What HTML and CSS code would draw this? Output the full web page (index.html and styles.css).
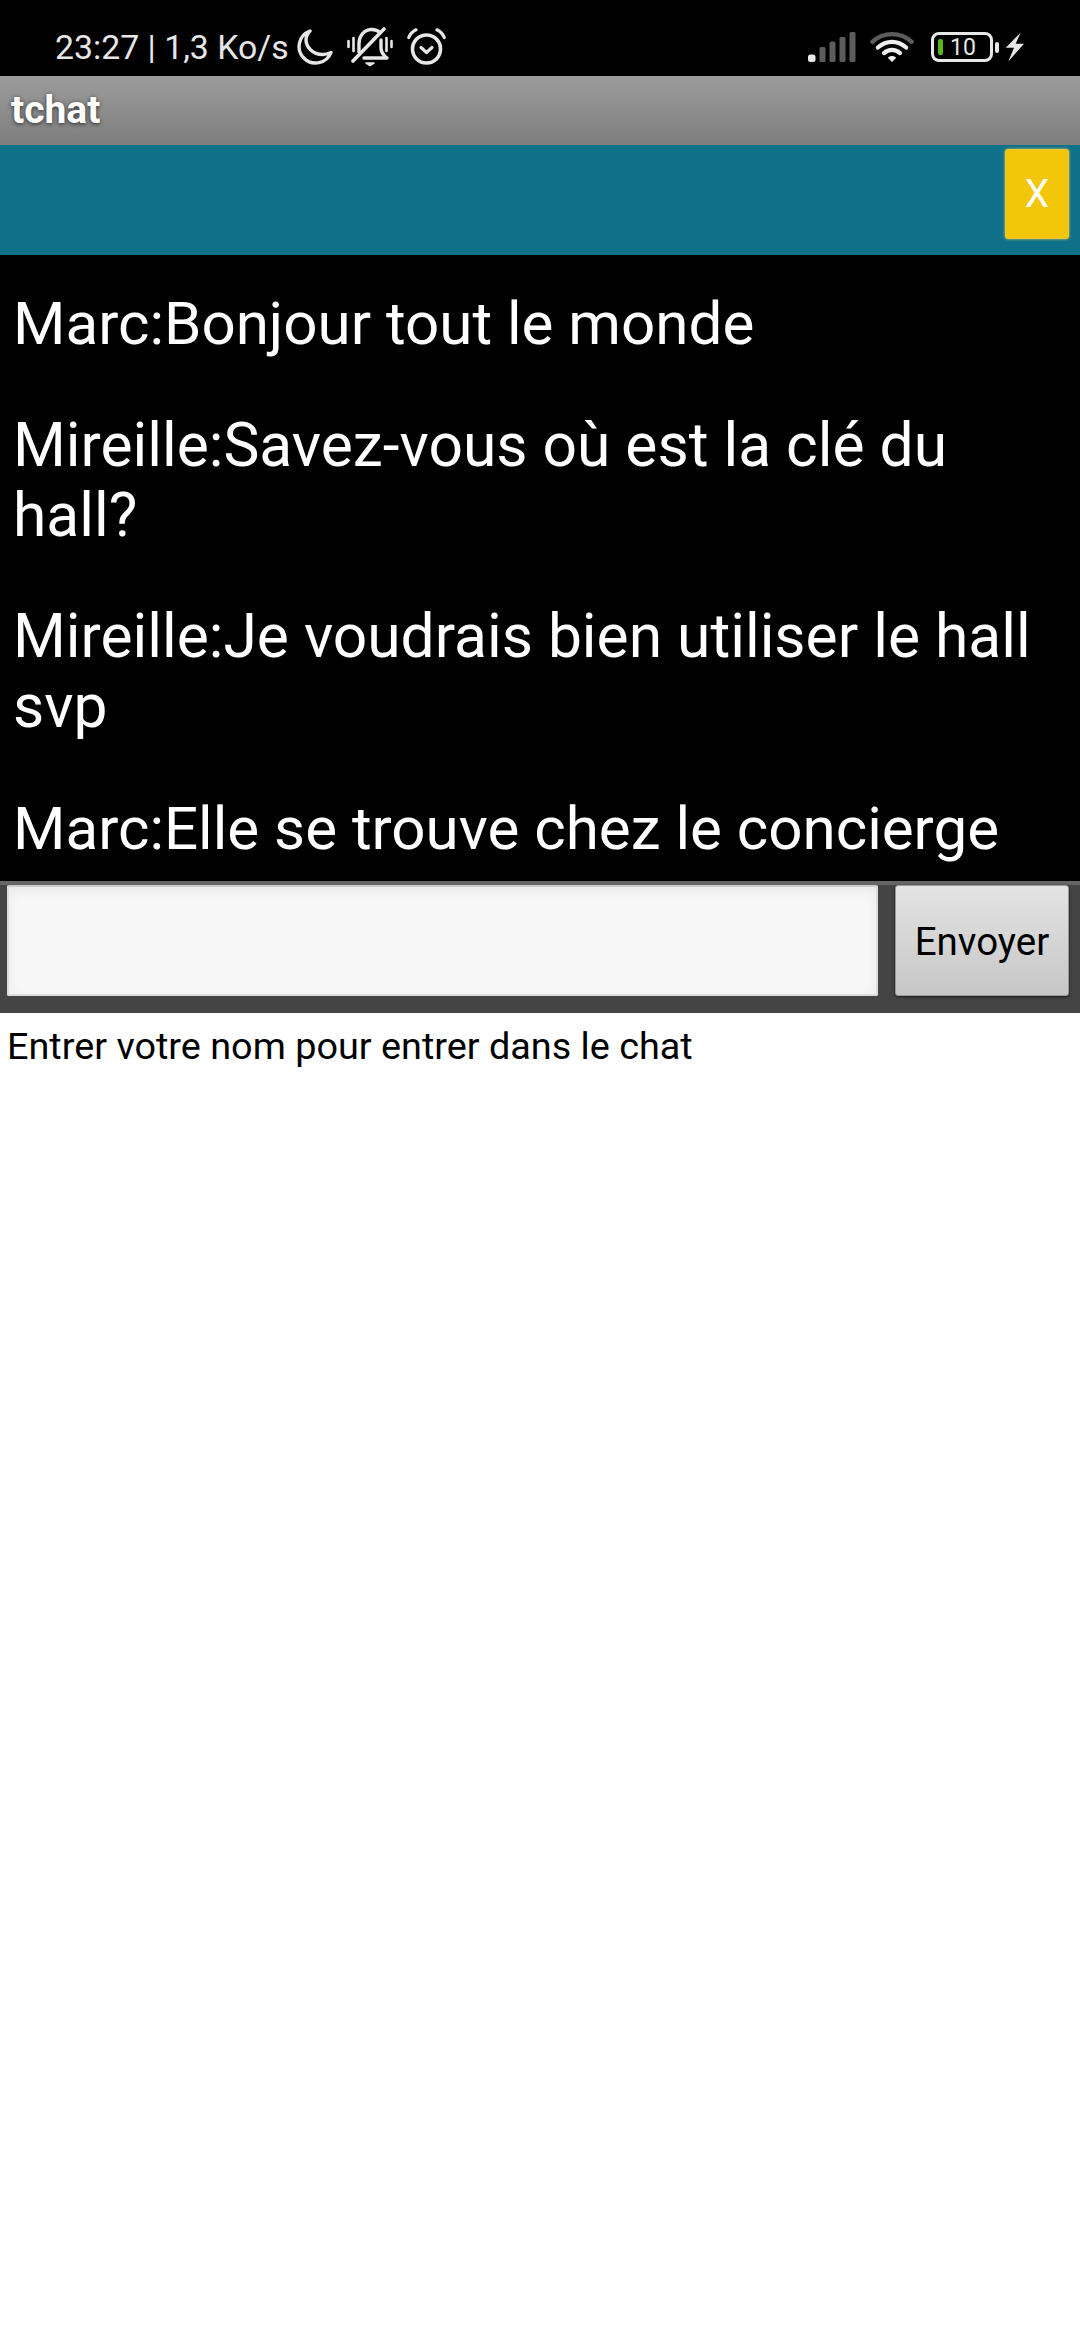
FILE: index.html
```html
<!DOCTYPE html>
<html lang="fr">
<head>
<meta charset="utf-8">
<title>tchat</title>
<link rel="stylesheet" href="styles.css">
</head>
<body>
<div class="status">
  <span class="status-text">23:27 | 1,3 Ko/s</span>
  <svg class="ic-moon" width="38" height="38" viewBox="0 0 38 38"><path d="M15 3A16.500 16.500 0 1 0 36 24.500C33 25.800 30.500 26.500 27.500 26.500C17.500 26.500 11 18.500 11 12C11 8.500 12.500 5.500 15 3Z" fill="none" stroke="#e6e6e6" stroke-width="3.400" stroke-linejoin="round"/></svg>
  <svg class="ic-bell" width="46" height="40" viewBox="0 0 46 40" fill="none" stroke="#e6e6e6" stroke-linecap="round" stroke-linejoin="round"><path d="M12 25V17C12 9 17 3 24 2.500C28 2.300 31 3.500 33 5.500" stroke-width="3.400"/><path d="M34 13V21C34 25 36 28 40 31H17" stroke-width="3.400"/><path d="M37 2L6 34" stroke-width="3.600"/><path d="M1.500 14V20M6.500 11V24M39.500 11V24M44.500 14V20" stroke-width="2.600"/><path d="M19 36H27L23 38.500Z" fill="#e6e6e6" stroke-width="1.500"/></svg>
  <svg class="ic-alarm" width="39" height="38" viewBox="0 0 39 38" fill="none" stroke="#e6e6e6" stroke-linecap="round" stroke-linejoin="round"><circle cx="19.500" cy="21" r="14" stroke-width="3.600"/><path d="M14 19.500L19.500 24.500L25 19.500" stroke-width="3.200"/><path d="M1.800 9.500C3 6 5.500 3.500 9 1.800M37.200 9.500C36 6 33.500 3.500 30 1.800" stroke-width="3.200"/></svg>
  <span class="status-gap"></span>
  <svg class="ic-signal" width="48" height="30" viewBox="0 0 48 30"><rect x="0" y="22.500" width="7.500" height="7.500" rx="2.500" fill="#e8e8e8"/><rect x="11.500" y="15" width="6" height="15" rx="1.500" fill="#5c5c5c"/><rect x="21.500" y="9.500" width="6" height="20.500" rx="1.500" fill="#5c5c5c"/><rect x="31.500" y="5" width="6" height="25" rx="1.500" fill="#5c5c5c"/><rect x="41.500" y="0" width="6" height="30" rx="1.500" fill="#5c5c5c"/></svg>
  <svg class="ic-wifi" width="46" height="32" viewBox="0 0 46 34" fill="none" stroke-linecap="round"><path d="M2 11.500C14 0.500 32 0.500 44 11.500" stroke="#5c5c5c" stroke-width="4.500"/><path d="M8 17.500C17 9.500 29 9.500 38 17.500" stroke="#eeeeee" stroke-width="4.500"/><path d="M14.500 23.500C19.500 19 26.500 19 31.500 23.500" stroke="#eeeeee" stroke-width="4.500"/><path d="M23 33L18.500 28.500C21 26 25 26 27.500 28.500Z" fill="#eeeeee"/></svg>
  <div class="battery"><span class="battery-level"></span><span class="battery-num">10</span></div>
  <span class="battery-tip"></span>
  <svg class="ic-bolt" width="20" height="30" viewBox="0 0 20 30"><path d="M15.700 0.500L0.700 15.700H9L3.300 29.500L19 11.700H10.700Z" fill="#e6e6e6"/></svg>
</div>
<header class="titlebar">tchat</header>
<div class="banner"><button class="close-btn">X</button></div>
<main class="chat">
  <p class="msg msg-marc">Marc:Bonjour tout le monde</p>
  <p class="msg">Mireille:Savez-vous où est la clé du hall?</p>
  <p class="msg">Mireille:Je voudrais bien utiliser le hall svp</p>
  <p class="msg msg-marc">Marc:Elle se trouve chez le concierge</p>
</main>
<form class="composer">
  <input class="composer-input" type="text">
  <button class="send-btn" type="button">Envoyer</button>
</form>
<p class="hint">Entrer votre nom pour entrer dans le chat</p>
</body>
</html>
```
FILE: styles.css
```css
* { box-sizing: border-box; }
html, body { margin: 0; padding: 0; }
body {
  width: 1080px;
  height: 2340px;
  overflow: hidden;
  background: #fff;
  color: #000;
  font-family: Roboto, "Liberation Sans", sans-serif;
}
.status {
  height: 76px;
  background: #000;
  display: flex;
  align-items: center;
  padding: 18px 0 0 55px;
  color: #e6e6e6;
}
.status-text { font-size: 33.800px; width: 240px; white-space: nowrap; line-height: 1; margin-top: 1px; }
.ic-bell { margin-left: 14px; }
.ic-alarm { margin-left: 14px; }
.status-gap { flex: 1; }
.ic-wifi { margin-left: 13px; }
.battery {
  width: 62px;
  height: 30px;
  margin-left: 16px;
  border: 3px solid #e8e8e8;
  border-radius: 8px;
  display: flex;
  align-items: center;
  padding-left: 4px;
}
.battery-level { width: 5px; height: 16px; border-radius: 2px; background: #5cb518; }
.battery-num { font-size: 23px; line-height: 1; margin-left: 7px; color: #e6e6e6; }
.battery-tip { width: 4px; height: 11px; margin-left: 2px; border-radius: 2px; background: #e8e8e8; }
.ic-bolt { margin-left: 6px; margin-right: 55px; }
.titlebar {
  height: 69px;
  background: linear-gradient(#9c9c9c, #7e7e7e);
  color: #fff;
  font-size: 39px;
  font-weight: 700;
  line-height: 69px;
  padding-left: 11px;
  text-shadow: 0 1px 4px rgba(0, 0, 0, .7);
}
.banner {
  height: 110px;
  background: #0e7089;
  display: flex;
  justify-content: flex-end;
  align-items: flex-start;
  padding: 4px 11px 0 0;
}
.close-btn {
  width: 64px;
  height: 90px;
  padding: 0;
  border: 1px solid #e8c840;
  border-radius: 3px;
  background: #f4c60a;
  box-shadow: 0 0 3px #d8c850;
  color: #fff;
  font: 400 39px Roboto, sans-serif;
}
.chat {
  height: 626px;
  overflow: hidden;
  background: #000;
  color: #fff;
  padding: 34px 13px 0;
}
.msg {
  margin: 0 0 51.500px;
  font-size: 60.500px;
  line-height: 70px;
}
.msg-marc { font-size: 60.100px; }
.composer {
  height: 132px;
  margin: 0;
  background: #444;
  border-top: 4px solid #666;
  display: flex;
  align-items: flex-start;
  gap: 17px;
  padding: 0 11px 0 7px;
}
.composer-input {
  width: 871px;
  height: 111px;
  border: 2px solid #ddd;
  border-top-color: #ccc;
  border-radius: 2px;
  background: #f7f7f7;
  box-shadow: inset 0 4px 12px rgba(0, 0, 0, .06);
  outline: none;
}
.send-btn {
  width: 174px;
  height: 111px;
  padding: 2px 0 0;
  border: 1px solid #999;
  border-radius: 3px;
  background: linear-gradient(#e4e4e4, #c6c6c6);
  box-shadow: 0 1px 3px rgba(0, 0, 0, .6);
  color: #000;
  font: 400 38.500px Roboto, sans-serif;
}
.hint {
  margin: 0;
  padding: 8px 0 0 7px;
  font-size: 37.800px;
  line-height: 50px;
}
```
